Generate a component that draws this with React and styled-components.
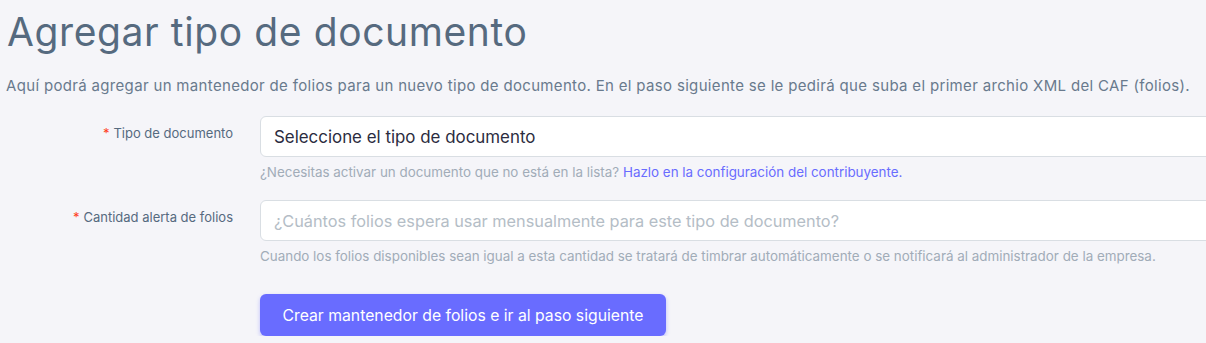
import React from "react";
import styled, { createGlobalStyle } from "styled-components";

const GlobalStyle = createGlobalStyle`
  html, body {
    margin: 0;
    padding: 0;
    background: #f5f5f9;
    overflow: hidden;
  }
  body {
    font-family: "Inter", "Noto Sans", sans-serif;
    color: #697a8d;
  }
`;

const Page = styled.div`
  width: 1400px;
  padding: 10px 0 0 7px;
`;

const Title = styled.h1`
  margin: 0;
  font-size: 39px;
  font-weight: 400;
  line-height: 44px;
  color: #566a7f;
  letter-spacing: 0.6px;
`;

const Lead = styled.p`
  margin: 21px 0 0 -1px;
  font-size: 15px;
  line-height: 22px;
  letter-spacing: 0.33px;
  color: #697a8d;
`;

const Form = styled.div`
  display: grid;
  grid-template-columns: 226px 1fr;
  column-gap: 27px;
  margin-top: 19px;
`;

const Label = styled.label`
  text-align: right;
  font-size: 13px;
  line-height: 20px;
  color: #566a7f;
  padding-top: 7px;
`;

const Required = styled.span`
  color: #ff3e1d;
  margin-right: 4px;
`;

const Field = styled.div`
  display: flex;
  flex-direction: column;
`;

const Input = styled.div`
  height: 41px;
  box-sizing: border-box;
  border: 1px solid #d9dee3;
  border-radius: 6px;
  background: #fff;
  display: flex;
  align-items: center;
  padding: 0 13px;
  font-size: ${(p) => (p.$placeholder ? "16.3px" : "16.9px")};
  color: ${(p) => (p.$placeholder ? "#b4bdc6" : "#2b2c40")};
`;

const Help = styled.div`
  margin-top: 6px;
  font-size: 13.4px;
  line-height: 18px;
  color: #a1acb8;
  margin-bottom: ${(p) => p.$gap || 0}px;
`;

const Link = styled.a`
  color: #696cff;
  text-decoration: none;
`;

const Button = styled.button`
  align-self: flex-start;
  height: 42px;
  padding: 0 22.5px;
  border: none;
  border-radius: 6px;
  background: #696cff;
  color: #fff;
  font-family: inherit;
  font-size: 15.75px;
  box-shadow: 0 2px 4px rgba(105, 108, 255, 0.4);
`;

export default function App() {
  return (
    <Page>
      <GlobalStyle />
      <Title>Agregar tipo de documento</Title>
      <Lead>
        Aquí podrá agregar un mantenedor de folios para un nuevo tipo de documento. En el paso siguiente se le pedirá que suba el primer archio XML del CAF (folios).
      </Lead>
      <Form>
        <Label>
          <Required>*</Required>Tipo de documento
        </Label>
        <Field>
          <Input>Seleccione el tipo de documento</Input>
          <Help $gap={19}>
            ¿Necesitas activar un documento que no está en la lista?{" "}
            <Link href="#">Hazlo en la configuración del contribuyente.</Link>
          </Help>
        </Field>
        <Label>
          <Required>*</Required>Cantidad alerta de folios
        </Label>
        <Field>
          <Input $placeholder>¿Cuántos folios espera usar mensualmente para este tipo de documento?</Input>
          <Help $gap={29}>
            Cuando los folios disponibles sean igual a esta cantidad se tratará de timbrar automáticamente o se notificará al administrador de la empresa.
          </Help>
        </Field>
        <div />
        <Field>
          <Button>Crear mantenedor de folios e ir al paso siguiente</Button>
        </Field>
      </Form>
    </Page>
  );
}
